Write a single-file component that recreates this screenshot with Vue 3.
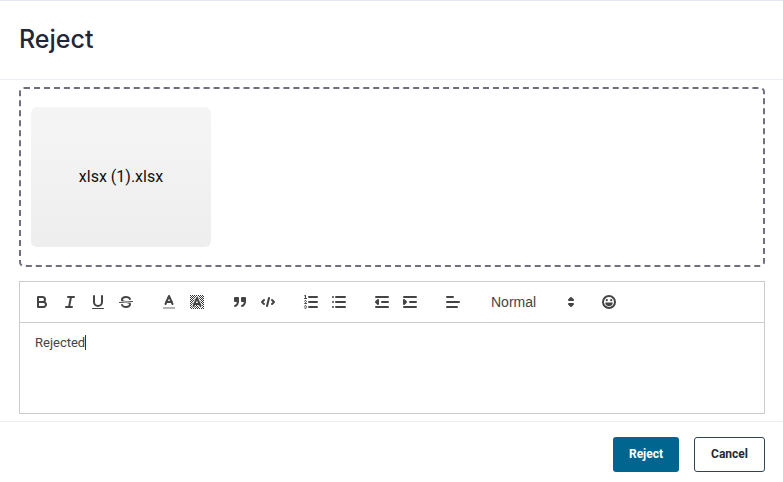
<script setup>
const caption = 'xlsx (1).xlsx'
</script>

<template>
  <div class="modal">
    <header class="head"><h1>Reject</h1></header>
    <section class="body">
      <div class="drop">
        <div class="file">{{ caption }}</div>
      </div>
      <div class="editor">
        <div class="toolbar">
          <span class="group">
            <button><svg viewBox="0 0 18 18"><path d="M5,4H9.5A2.5,2.5,0,0,1,12,6.5v0A2.5,2.5,0,0,1,9.5,9H5V4Z"/><path d="M5,9h5.5A2.5,2.5,0,0,1,13,11.5v0A2.5,2.5,0,0,1,10.5,14H5V9Z"/></svg></button>
            <button><svg viewBox="0 0 18 18"><line x1="7" x2="13" y1="4" y2="4"/><line x1="5" x2="11" y1="14" y2="14"/><line x1="8" x2="10" y1="14" y2="4"/></svg></button>
            <button><svg viewBox="0 0 18 18"><path d="M5,3V9a4,4,0,0,0,4,4H9a4,4,0,0,0,4-4V3"/><rect class="fill" height="1" rx="0.5" ry="0.5" width="12" x="3" y="15"/></svg></button>
            <button><svg viewBox="0 0 18 18"><line class="thin" x1="15.5" x2="2.5" y1="8.5" y2="9.5"/><path class="fill" d="M9.007,8C6.542,7.791,6,7.519,6,6.5,6,5.792,7.283,5,9,5c1.571,0,2.765.679,2.969,1.309a1,1,0,0,0,1.9-.617C13.356,4.106,11.354,3,9,3,6.2,3,4,4.538,4,6.5a3.2,3.2,0,0,0,.5,1.843Z"/><path class="fill" d="M8.984,10C11.457,10.208,12,10.479,12,11.5c0,.708-1.283,1.5-3,1.5-1.571,0-2.765-.679-2.969-1.309a1,1,0,1,0-1.9.617C4.644,13.894,6.646,15,9,15c2.8,0,5-1.538,5-3.5a3.2,3.2,0,0,0-.5-1.843Z"/></svg></button>
          </span>
          <span class="group">
            <button><svg viewBox="0 0 18 18"><line class="label" x1="3" x2="15" y1="15" y2="15"/><polyline points="5.5 11 9 3 12.5 11"/><line x1="11.63" x2="6.38" y1="9" y2="9"/></svg></button>
            <button><svg viewBox="0 0 18 18"><defs><pattern id="chk" width="2" height="2" patternUnits="userSpaceOnUse"><rect class="ink" width="1" height="1"/><rect class="ink" x="1" y="1" width="1" height="1"/></pattern></defs><rect class="chk" x="2" y="2" width="14" height="14"/><polyline class="halo" points="5.5 13 9 5 12.5 13"/><polyline points="5.5 13 9 5 12.5 13"/><line x1="11.63" x2="6.38" y1="11" y2="11"/></svg></button>
          </span>
          <span class="group">
            <button><svg viewBox="0 0 18 18"><rect class="fill solid" height="3" width="3" x="4" y="5"/><rect class="fill solid" height="3" width="3" x="11" y="5"/><path d="M7,8c0,4.031-3,5-3,5"/><path d="M14,8c0,4.031-3,5-3,5"/></svg></button>
            <button><svg viewBox="0 0 18 18"><polyline points="5 7 3 9 5 11"/><polyline points="13 7 15 9 13 11"/><line x1="10" x2="8" y1="5" y2="13"/></svg></button>
          </span>
          <span class="group">
            <button><svg viewBox="0 0 18 18"><line x1="7" x2="15" y1="4" y2="4"/><line x1="7" x2="15" y1="9" y2="9"/><line x1="7" x2="15" y1="14" y2="14"/><line class="thin" x1="2.5" x2="4.5" y1="5.5" y2="5.5"/><path class="fill" d="M3.5,6A0.5,0.5,0,0,1,3,5.5V3.085l-0.276.138A0.5,0.5,0,0,1,2.053,3c-0.124-.247-0.023-0.324.224-0.447l1-.5A0.5,0.5,0,0,1,4,2.5v3A0.5,0.5,0,0,1,3.5,6Z"/><path class="thin" d="M4.5,10.5h-2c0-.234,1.85-1.076,1.85-2.234A0.959,0.959,0,0,0,2.5,8.156"/><path class="thin" d="M2.5,14.846a0.959,0.959,0,0,0,1.85-.109A0.7,0.7,0,0,0,3.75,14a0.688,0.688,0,0,0,.6-0.736,0.959,0.959,0,0,0-1.85-.109"/></svg></button>
            <button><svg viewBox="0 0 18 18"><line x1="6" x2="15" y1="4" y2="4"/><line x1="6" x2="15" y1="9" y2="9"/><line x1="6" x2="15" y1="14" y2="14"/><line x1="3" x2="3" y1="4" y2="4"/><line x1="3" x2="3" y1="9" y2="9"/><line x1="3" x2="3" y1="14" y2="14"/></svg></button>
          </span>
          <span class="group">
            <button><svg viewBox="0 0 18 18"><line x1="3" x2="15" y1="14" y2="14"/><line x1="3" x2="15" y1="4" y2="4"/><line x1="9" x2="15" y1="9" y2="9"/><polyline class="solid fill" points="5 7 5 11 3 9 5 7"/></svg></button>
            <button><svg viewBox="0 0 18 18"><line x1="3" x2="15" y1="14" y2="14"/><line x1="3" x2="15" y1="4" y2="4"/><line x1="9" x2="15" y1="9" y2="9"/><polyline class="solid fill" points="3 7 3 11 5 9 3 7"/></svg></button>
          </span>
          <span class="group">
            <button><svg viewBox="0 0 18 18"><line x1="3" x2="15" y1="9" y2="9"/><line x1="3" x2="13" y1="14" y2="14"/><line x1="3" x2="9" y1="4" y2="4"/></svg></button>
          </span>
          <span class="group picker">
            <span>Normal</span>
            <svg class="arrows" viewBox="0 0 18 18"><polygon class="solid fill" points="7 11 9 13 11 11 7 11"/><polygon class="solid fill" points="7 7 9 5 11 7 7 7"/></svg>
          </span>
          <span class="group">
            <button><svg viewBox="0 0 18 18"><circle cx="9" cy="9" r="6"/><circle class="fill" cx="6.8" cy="7.2" r="1.1"/><circle class="fill" cx="11.2" cy="7.2" r="1.1"/><path class="fill" d="M5.2,9.6h7.6c0,2.2-1.6,3.6-3.8,3.6S5.2,11.8,5.2,9.6Z"/></svg></button>
          </span>
        </div>
        <div class="text"><p>Rejected<i class="caret"></i></p></div>
      </div>
    </section>
    <footer class="foot">
      <button class="btn primary">Reject</button>
      <button class="btn ghost">Cancel</button>
    </footer>
  </div>
</template>

<style>
html, body { margin: 0; background: #fff; overflow: hidden; }
</style>

<style scoped>
.modal { width: 783px; height: 482px; box-sizing: border-box; border-top: 1px solid #e4e8f3; background: #fff; font-family: Roboto, sans-serif; }
.head { height: 79px; box-sizing: border-box; border-bottom: 1px solid #eceef3; padding: 0 19px; display: flex; align-items: center; }
h1 { margin: 0; font-family: Inter, sans-serif; font-size: 25px; font-weight: 500; color: #1f2738; margin-top: -2px; }
.body { padding: 7px 18px 0 19px; }
.drop { height: 180px; box-sizing: border-box; border: 2px dashed #6f6f80; border-radius: 5px; padding: 18px 10px; }
.file { width: 180px; height: 140px; box-sizing: border-box; padding-bottom: 2px; border-radius: 6px; background: linear-gradient(#f5f5f5, #eeeeee); display: flex; align-items: center; justify-content: center; font-size: 16px; color: #111; }
.editor { margin-top: 14px; border: 1px solid #ccc; height: 133px; box-sizing: border-box; }
.toolbar { height: 41px; box-sizing: border-box; border-bottom: 1px solid #ccc; padding: 8px; display: flex; align-items: center; }
.group { display: flex; margin-right: 15px; height: 24px; align-items: center; }
button { border: 0; background: none; padding: 0; }
.group button { width: 28px; height: 24px; padding: 3px 5px; box-sizing: border-box; display: block; }
svg { display: block; width: 18px; height: 18px; fill: none; stroke: #444; stroke-width: 2; stroke-linecap: round; stroke-linejoin: round; }
.thin { stroke-width: 1; }
.fill { fill: #444; stroke: none; }
.fill.solid { stroke: #444; }
.ink { fill: #333; stroke: none; }
.label { stroke: #b5b5b5; stroke-linecap: butt; }
.chk { fill: url(#chk); stroke: none; }
.halo { stroke: #fff; stroke-width: 3.5; }
.picker { width: 98px; justify-content: space-between; font: 14px "Liberation Sans", Arial, sans-serif; color: #444; padding-left: 9px; box-sizing: border-box; }
.arrows { flex: none; }
.text { padding: 10px 15px; font-size: 13px; line-height: 19px; color: #444; }
.text p { margin: 0; }
.caret { display: inline-block; width: 1px; height: 15px; background: #1a3a6b; vertical-align: -3px; }
.foot { margin-top: 7px; border-top: 1px solid #eceef3; padding: 15px 18px 0 0; display: flex; justify-content: flex-end; gap: 15px; }
.btn { height: 35px; box-sizing: border-box; padding-bottom: 2px; border-radius: 3px; font: 700 12px Roboto, sans-serif; }
.primary { width: 66px; background: #00658f; color: #fff; }
.ghost { width: 71px; background: #fff; border: 1px solid #2e4453; color: #222b33; }
</style>
